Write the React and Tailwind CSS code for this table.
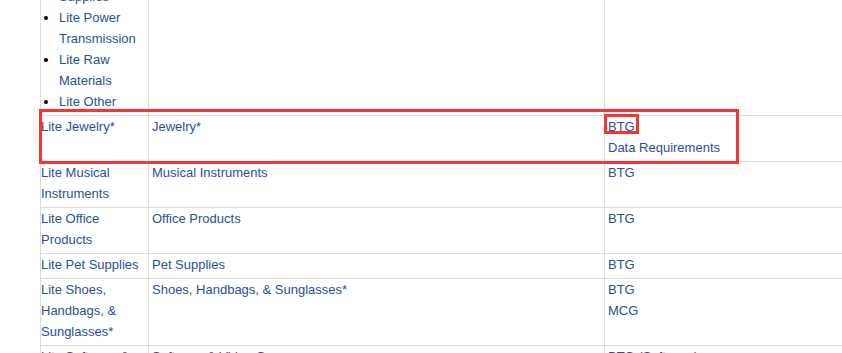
import React from "react";

const rows = [
  { c1: ["Lite Jewelry*"], c2: "Jewelry*", c3: ["BTG", "Data Requirements"] },
  { c1: ["Lite Musical Instruments"], c2: "Musical Instruments", c3: ["BTG"] },
  { c1: ["Lite Office Products"], c2: "Office Products", c3: ["BTG"] },
  { c1: ["Lite Pet Supplies"], c2: "Pet Supplies", c3: ["BTG"] },
  { c1: ["Lite Shoes, Handbags, & Sunglasses*"], c2: "Shoes, Handbags, & Sunglasses*", c3: ["BTG", "MCG"] },
  { c1: ["Lite Software & Video Games"], c2: "Software & Video Games", c3: ["BTG (Software)", "MCG"] },
];

const listItems = [
  "Lite Industrial Supplies",
  "Lite Power Transmission",
  "Lite Raw Materials",
  "Lite Other",
];

export default function App() {
  return (
    <div
      className="relative h-[353px] w-[842px] overflow-hidden bg-white text-[13px] leading-[21px] text-[#2b4f93]"
      style={{ fontFamily: '"Liberation Sans", Arial, sans-serif' }}
    >
      <div className="-mt-[35px] ml-[40px] flex flex-col">
        {/* first row with list */}
        <div className="flex border-b border-[#dcdcdc]">
          <div className="w-[108px] shrink-0 border-l border-[#dcdcdc] pb-[3px]">
            <ul className="m-0 list-disc pl-[18px] marker:text-black">
              {listItems.map((t) => (
                <li key={t}>{t}</li>
              ))}
            </ul>
          </div>
          <div className="w-[456px] shrink-0 border-l border-[#dcdcdc]" />
          <div className="flex-1 border-l border-[#dcdcdc]" />
        </div>
        {rows.map((r, i) => (
          <div key={i} className="flex border-b border-[#dcdcdc]">
            <div className="w-[108px] shrink-0 border-l border-[#dcdcdc] pb-[3px]">
              {r.c1.map((t) => (
                <div key={t}>{t}</div>
              ))}
            </div>
            <div className="w-[456px] shrink-0 border-l border-[#dcdcdc] pb-[3px] pl-[3px]">
              {r.c2}
            </div>
            <div className="flex-1 border-l border-[#dcdcdc] pb-[3px] pl-[3px]">
              {r.c3.map((t) => (
                <div key={t}>{t}</div>
              ))}
            </div>
          </div>
        ))}
      </div>
      {/* annotation overlays */}
      <div className="pointer-events-none absolute left-[39px] top-[109px] h-[55px] w-[700px] border-[3px] border-[#f73333]" />
      <div className="pointer-events-none absolute left-[604px] top-[114px] h-[20px] w-[35px] border-[3px] border-[#f73333]" />
    </div>
  );
}
